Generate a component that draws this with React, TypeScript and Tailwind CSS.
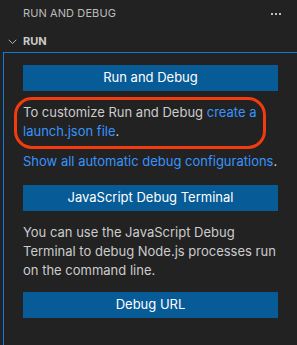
import React from "react";

const font = { fontFamily: "Inter, 'Noto Sans', sans-serif" };

function Btn({ children }: { children: React.ReactNode }) {
  return (
    <div className="h-[26px] w-[255px] bg-[#075c98] text-white text-[13px] flex items-center justify-center">
      {children}
    </div>
  );
}

export default function App() {
  return (
    <div className="relative w-[297px] h-[345px] bg-[#222222] overflow-hidden text-[#cccccc]" style={font}>
      <div className="h-[26px] flex items-center pl-[23px] pr-[16px] justify-between">
        <span className="text-[11px] tracking-[0.1px] text-[#bbbbbb]">RUN AND DEBUG</span>
        <span className="flex gap-[2px] mt-[1px]">
          <span className="w-[2px] h-[2px] bg-[#c0c0c0]" />
          <span className="w-[2px] h-[2px] bg-[#c0c0c0]" />
          <span className="w-[2px] h-[2px] bg-[#c0c0c0]" />
        </span>
      </div>
      <div className="mt-[4px] h-[22px] flex items-center">
        <svg className="ml-[7px] mr-[5px]" width="11" height="11" viewBox="0 0 16 16" fill="none">
          <path d="M2.5 5.5 L8 11 L13.5 5.5" stroke="#c5c5c5" strokeWidth="1.3" />
        </svg>
        <span className="text-[11px] font-bold text-[#cccccc]">RUN</span>
      </div>
      <div className="ml-[3px] border-t border-l border-[#0f7ad8] pt-[12px] pl-[19px] h-[300px]">
        <Btn>Run and Debug</Btn>
        <p className="mt-[12px] text-[13px] leading-[19px] w-[255px]">
          To customize Run and Debug <span className="text-[#3794ff]">create a launch.json file</span>.
        </p>
        <p className="mt-[11px] text-[13px] leading-[19px] w-[265px]">
          <span className="text-[#3794ff]">Show all automatic debug configurations</span>.
        </p>
        <div className="mt-[14px]">
          <Btn>JavaScript Debug Terminal</Btn>
        </div>
        <p className="mt-[12px] text-[13px] leading-[19px] w-[255px]">
          You can use the JavaScript Debug Terminal to debug Node.js processes run on the command line.
        </p>
        <div className="mt-[12px]">
          <Btn>Debug URL</Btn>
        </div>
      </div>
      <div className="absolute left-[14px] top-[97px] w-[252px] h-[52px] border-[3px] border-[#f23b0e] rounded-[18px]" />
    </div>
  );
}
